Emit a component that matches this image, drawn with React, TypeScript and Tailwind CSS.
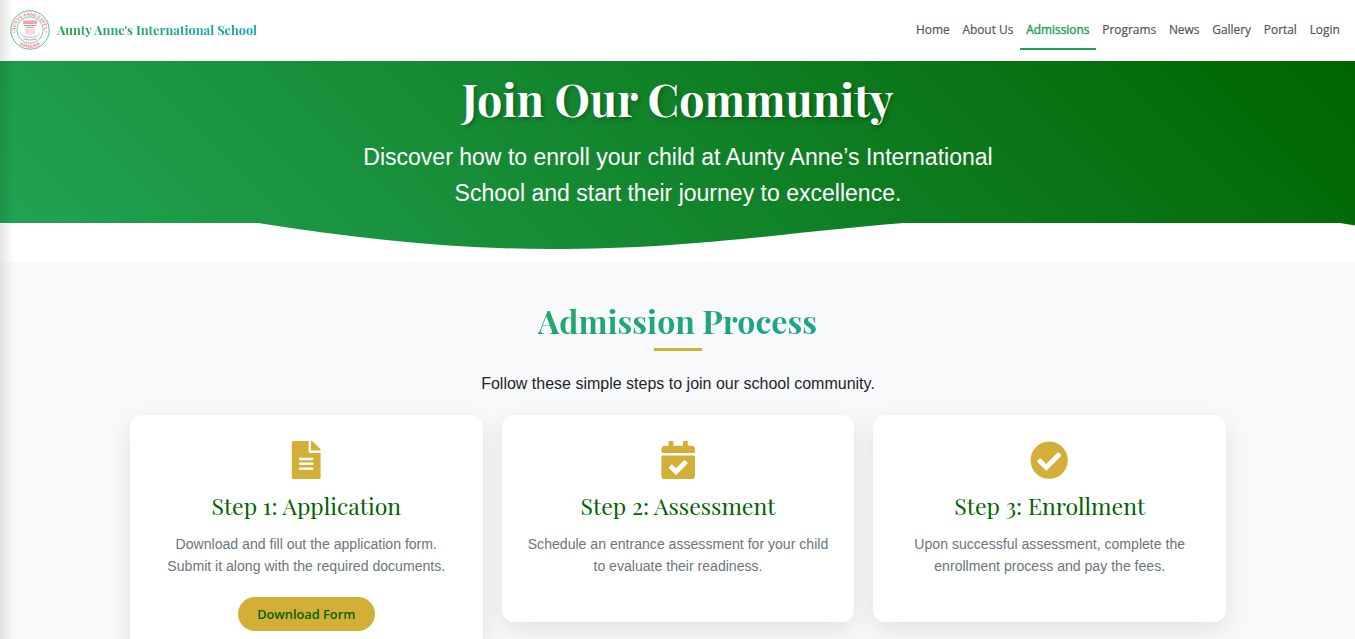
import { FaFileAlt, FaCalendarCheck, FaCheckCircle } from "react-icons/fa";
import type { IconType } from "react-icons";

const serif = "font-['Playfair_Display','Liberation_Serif',serif]";

const links = ["Home", "About Us", "Admissions", "Programs", "News", "Gallery", "Portal", "Login"];

type Step = { icon: IconType; iconClass: string; title: string; lines: string[]; action?: string };

const steps: Step[] = [
  {
    icon: FaFileAlt,
    iconClass: "",
    title: "Step 1: Application",
    lines: ["Download and fill out the application form.", "Submit it along with the required documents."],
    action: "Download Form",
  },
  {
    icon: FaCalendarCheck,
    iconClass: "",
    title: "Step 2: Assessment",
    lines: ["Schedule an entrance assessment for your child", "to evaluate their readiness."],
  },
  {
    icon: FaCheckCircle,
    iconClass: "mr-px",
    title: "Step 3: Enrollment",
    lines: ["Upon successful assessment, complete the", "enrollment process and pay the fees."],
  },
];

function Crest() {
  return (
    <svg viewBox="0 0 40 40" className="mb-px size-10 shrink-0">
      <defs>
        <path id="arcTop" d="M5.6 23 A14.6 14.6 0 1 1 34.4 23" />
        <path id="arcBottom" d="M5 29.5 A17.8 17.8 0 0 0 35 29.5" />
      </defs>
      <circle cx="20" cy="20" r="19.2" fill="#fff" stroke="#5fbd8a" strokeWidth="1" />
      <circle cx="20" cy="20" r="13.2" fill="none" stroke="#74c79a" strokeWidth="0.9" />
      <text fontSize="4.8" fontWeight="700" fill="#ee6f7a" fontFamily="Liberation Serif, serif">
        <textPath href="#arcTop" textLength="50">• AUNTY ANNE'S INT'L •</textPath>
      </text>
      <text fontSize="4.6" fontWeight="700" fill="#ee7d86" fontFamily="Liberation Serif, serif">
        <textPath href="#arcBottom" startOffset="18%" textLength="23">SCHOOL, AMA</textPath>
      </text>
      <rect x="13" y="10.5" width="14" height="3.6" fill="#f3a3b2" />
      <path d="M13.5 15.5h13M16 17.3h8" stroke="#8fa3a0" strokeWidth="0.9" />
      <rect x="15" y="18.5" width="10" height="6" fill="#fbd7df" />
      <path d="M10.5 23.5c2 5 17 5 19 0" fill="none" stroke="#a3c9bb" strokeWidth="1" />
      <path d="M13.5 28.5c3 2 10 2 13 0" fill="none" stroke="#ec93c9" strokeWidth="1.2" />
    </svg>
  );
}

export default function App() {
  return (
    <div className="relative flex h-[639px] w-full flex-col overflow-hidden bg-[#f8f9fb] font-['Liberation_Sans',Arial,sans-serif] text-[#212529]">
      <header className="flex h-[61px] shrink-0 items-center justify-between bg-white pr-[8.8px] pl-[9.6px]">
        <div className="flex items-center gap-[7.4px]">
          <Crest />
          <span className={`${serif} mb-[2px] bg-gradient-to-r from-[#28a745] to-[#17a2b8] bg-clip-text text-[12.8px] leading-5 font-bold whitespace-nowrap text-transparent`}>
            Aunty Anne's International School
          </span>
        </div>
        <nav className="flex h-[50px] self-start pt-[11px] font-['Open_Sans',sans-serif] text-[11.92px] font-medium text-[#555]">
          {links.map((l) => (
            <a
              key={l}
              className={
                l === "Admissions"
                  ? "h-[39px] border-b-2 border-[#24a159] px-[6.4px] pt-2 leading-5 whitespace-nowrap text-[#24a159] [-webkit-text-stroke:0.4px_#24a159]"
                  : "h-[39px] px-[6.4px] pt-2 leading-5 whitespace-nowrap [-webkit-text-stroke:0.2px_#555]"
              }
            >
              {l}
            </a>
          ))}
        </nav>
      </header>

      <section className="relative flex h-[202px] shrink-0 flex-col items-center bg-[linear-gradient(45deg,#23a455_0%,#006400_100%)] text-center text-white">
        <svg viewBox="0 0 1355 40" preserveAspectRatio="none" className="absolute bottom-0 left-0 h-10 w-full">
          <path d="M0 0H258C360 16 455 26 550 26C690 26 780 10 904 0H1340L1355 2.5V40H0Z" fill="#fff" />
        </svg>
        <h1 className={`${serif} relative mt-[9px] text-[44.8px] leading-[58px] font-bold whitespace-nowrap [text-shadow:2px_2px_4px_rgba(0,0,0,0.3)]`}>
          Join Our Community
        </h1>
        <p className="relative mt-[11px] ml-px text-[23.04px] leading-9 whitespace-nowrap">
          Discover how to enroll your child at Aunty Anne’s International
          <br />
          School and start their journey to excellence.
        </p>
      </section>

      <main className="flex flex-col items-center">
        <h2 className={`${serif} mt-[37px] bg-gradient-to-r from-[#24a76a] to-[#1da491] bg-clip-text text-[32px] leading-[42px] font-bold whitespace-nowrap text-transparent`}>
          Admission Process
        </h2>
        <div className="mt-[6px] h-[3px] w-12 bg-[#d4af37]" />
        <p className="mt-[21px] ml-px text-base leading-6 whitespace-nowrap">Follow these simple steps to join our school community.</p>
        <div className="mt-[19px] ml-px grid w-[1096px] grid-cols-3 items-start gap-[19.2px]">
          {steps.map(({ icon: Icon, iconClass, title, lines, action }) => (
            <article
              key={title}
              className={`${action ? "h-[260px]" : "h-[207px]"} flex flex-col items-center rounded-xl bg-white pt-[25.6px] text-center shadow-[0_8px_25px_rgba(0,0,0,0.1)]`}
            >
              <Icon className={`${iconClass} size-[38.4px] text-[#d4af37]`} />
              <h3 className={`${serif} mt-[12.4px] text-[23.04px] leading-[30px] whitespace-nowrap text-[#006400]`}>{title}</h3>
              <p className="mt-3 text-[14.08px] leading-[22px] whitespace-nowrap text-[#6c757d]">
                {lines[0]}
                <br />
                {lines[1]}
              </p>
              {action && (
                <button className="mt-5 h-[34px] w-[137px] rounded-full bg-[#d4af37] font-['Open_Sans',sans-serif] text-[12.8px] font-semibold text-[#006400]">
                  {action}
                </button>
              )}
            </article>
          ))}
        </div>
      </main>
      <div className="pointer-events-none absolute inset-y-0 left-0 w-[14px] bg-gradient-to-r from-black/10 to-transparent" />
    </div>
  );
}
